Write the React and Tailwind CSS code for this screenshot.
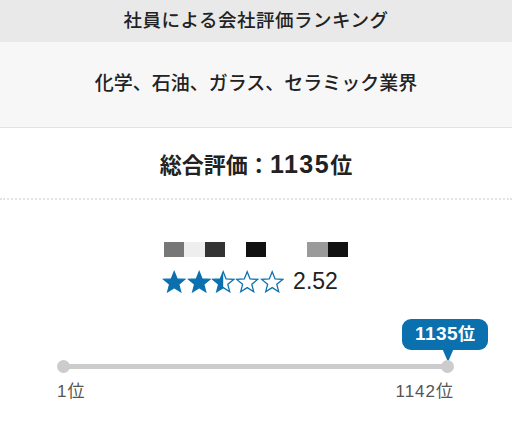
import React from 'react';

const BLUE = '#0b70ae';

function Star({ fill }) {
  // fill: 'full' | 'half' | 'none'
  const d = 'M12 1.8l2.9 7.1 7.6.5-5.9 4.9 1.9 7.4L12 17.6l-6.5 4.1 1.9-7.4-5.9-4.9 7.6-.5z';
  return (
    <svg width="24.4" height="23" viewBox="0 0 24 23">
      <defs>
        <clipPath id="half-clip">
          <rect x="0" y="0" width="12" height="23" />
        </clipPath>
      </defs>
      {fill === 'full' && <path d={d} fill={BLUE} />}
      {fill === 'half' && <path d={d} fill={BLUE} clipPath="url(#half-clip)" />}
      <path d={d} fill="none" stroke={BLUE} strokeWidth="1.3" strokeLinejoin="miter" />
    </svg>
  );
}

function Blocks() {
  const cells = ['#777', '#eeeeee', '#333', 'transparent', '#111', 'transparent', 'transparent', '#9a9a9a', '#111'];
  return (
    <div className="flex h-[15px]">
      {cells.map((c, i) => (
        <div key={i} className="w-[20.5px] h-[15px]" style={{ backgroundColor: c }} />
      ))}
    </div>
  );
}

export default function App() {
  return (
    <div
      className="w-[512px] h-[432px] bg-white text-[#222] overflow-hidden"
      style={{ fontFamily: '"Liberation Sans", "Noto Sans CJK JP", sans-serif' }}
    >
      <div className="h-[42px] bg-[#e9e9e9] flex items-center justify-center text-[18.5px] font-medium tracking-[0.5px]">
        社員による会社評価ランキング
      </div>
      <div className="h-[86px] bg-[#f7f7f7] border-b border-[#e2e2e2] flex items-center justify-center text-[19px] font-medium">
        化学、石油、ガラス、セラミック業界
      </div>
      <div className="h-[72px] border-b-2 border-dotted border-[#e4e4e4] flex items-center justify-center pt-[3px]">
        <div className="flex items-baseline font-bold text-[22px]">
          <span>総合評価：</span>
          <span className="text-[25px] tracking-[1.5px]">1135</span>
          <span>位</span>
        </div>
      </div>

      <div className="flex flex-col items-center pt-[42px]">
        <Blocks />
        <div className="flex items-center mt-[13px] ml-[-12px]">
          <div className="flex">
            <Star fill="full" />
            <Star fill="full" />
            <Star fill="half" />
            <Star fill="none" />
            <Star fill="none" />
          </div>
          <span className="ml-[9px] text-[23px] leading-none font-normal text-[#222]">2.52</span>
        </div>
      </div>

      <div className="relative ml-[57px] w-[397px] mt-[26px] h-[80px]">
        <div className="absolute left-[345px] top-0 w-[86px] h-[31px] rounded-[9px] text-white font-bold flex items-center justify-center" style={{ backgroundColor: BLUE }}>
          <span className="flex items-baseline">
            <span className="text-[19px] tracking-[0.5px]">1135</span>
            <span className="text-[17px]">位</span>
          </span>
          <div
            className="absolute left-[40px] top-[29px] w-0 h-0 border-l-[6px] border-r-[6px] border-t-[14px] border-l-transparent border-r-transparent"
            style={{ borderTopColor: BLUE }}
          />
        </div>
        <div className="absolute left-[6px] right-[6px] top-[45px] h-[5px] bg-[#cccccc]" />
        <div className="absolute left-0 top-[41px] w-[13px] h-[13px] rounded-full bg-[#cccccc]" />
        <div className="absolute right-0 top-[41px] w-[13px] h-[13px] rounded-full bg-[#cccccc]" />
        <div className="absolute left-0 top-[60px] text-[17px] text-[#555] tracking-[1px]">1位</div>
        <div className="absolute right-0 top-[60px] text-[17px] text-[#555] tracking-[1px]">1142位</div>
      </div>
    </div>
  );
}
